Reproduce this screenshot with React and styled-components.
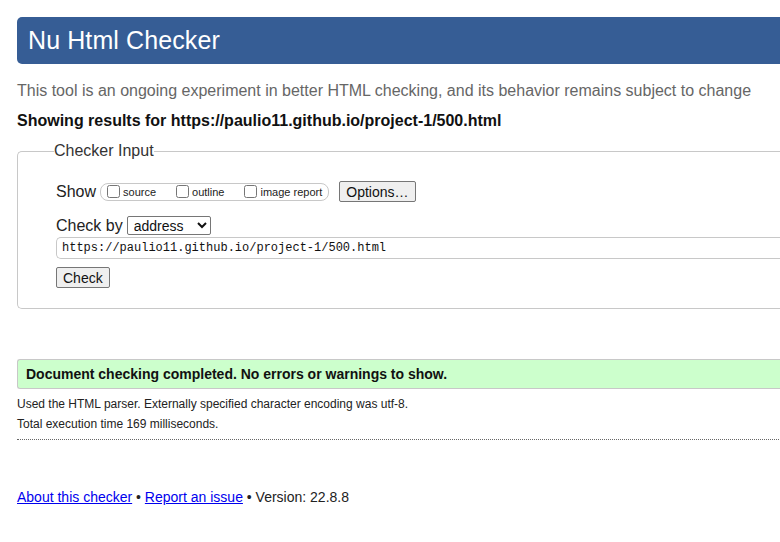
import React from "react";
import styled, { createGlobalStyle } from "styled-components";

const GlobalStyle = createGlobalStyle`
  html, body {
    margin: 0;
    padding: 0;
    background: #ffffff;
    overflow: hidden;
  }
  body {
    font-family: "Liberation Sans", Arial, sans-serif;
    color: #222;
  }
`;

export default function App() {
  return (
    <>
      <GlobalStyle />
      <StyledPage>
        <StyledHeader>
          <StyledTitle>Nu Html Checker</StyledTitle>
        </StyledHeader>
        <StyledIntro>
          This tool is an ongoing experiment in better HTML checking, and its
          behavior remains subject to change
        </StyledIntro>
        <StyledResultsFor>
          Showing results for https://paulio11.github.io/project-1/500.html
        </StyledResultsFor>

        <StyledFieldset>
          <StyledLegend>Checker Input</StyledLegend>
          <StyledRow>
            <StyledLabel>Show</StyledLabel>
            <StyledChoices>
              <StyledChoice>
                <StyledCheckbox type='checkbox' />
                source
              </StyledChoice>
              <StyledChoice>
                <StyledCheckbox type='checkbox' />
                outline
              </StyledChoice>
              <StyledChoice>
                <StyledCheckbox type='checkbox' />
                image report
              </StyledChoice>
            </StyledChoices>
            <StyledButton>Options…</StyledButton>
          </StyledRow>
          <StyledRow $gap={4}>
            <StyledLabel>Check by</StyledLabel>
            <StyledSelect defaultValue='address'>
              <option value='address'>address</option>
              <option value='file'>file upload</option>
              <option value='text'>text input</option>
            </StyledSelect>
          </StyledRow>
          <StyledUrlInput
            type='text'
            defaultValue='https://paulio11.github.io/project-1/500.html'
          />
          <StyledButton>Check</StyledButton>
        </StyledFieldset>

        <StyledSuccess>
          Document checking completed. No errors or warnings to show.
        </StyledSuccess>
        <StyledDetails>
          <p>
            Used the HTML parser. Externally specified character encoding was
            utf-8.
          </p>
          <p>Total execution time 169 milliseconds.</p>
        </StyledDetails>

        <StyledFooter>
          <a href='#about'>About this checker</a> •{" "}
          <a href='#issue'>Report an issue</a> • Version: 22.8.8
        </StyledFooter>
      </StyledPage>
    </>
  );
}

const StyledPage = styled.div`
  width: 800px;
  padding: 17px 0 0 17px;
`;

const StyledHeader = styled.header`
  height: 47px;
  background-color: #365d95;
  border-radius: 5px 0 0 5px;
  display: flex;
  align-items: center;
  padding-left: 11px;
`;

const StyledTitle = styled.h1`
  margin: 0;
  color: #ffffff;
  font-size: 25px;
  font-weight: normal;
  letter-spacing: 0.1px;
`;

const StyledIntro = styled.p`
  margin: 17px 0 0;
  font-size: 16px;
  line-height: 20px;
  color: #666;
`;

const StyledResultsFor = styled.p`
  margin: 10px 0 0;
  font-size: 16px;
  line-height: 20px;
  font-weight: bold;
  color: #111;
`;

const StyledFieldset = styled.fieldset`
  margin: 11px 0 0;
  padding: 21px 0 20px 38px;
  border: 1px solid #c8c8c8;
  border-right: none;
  border-radius: 5px 0 0 5px;
  display: flex;
  flex-direction: column;
  align-items: flex-start;
`;

const StyledLegend = styled.legend`
  margin-left: -2px;
  padding: 0;
  font-size: 16px;
  color: #333;
`;

const StyledRow = styled.div`
  display: flex;
  align-items: center;
  gap: 4px;
  margin-bottom: ${(p) => (p.$gap ? 2 : 14)}px;
`;

const StyledLabel = styled.span`
  font-size: 16px;
  color: #222;
`;

const StyledChoices = styled.div`
  display: flex;
  align-items: center;
  gap: 17px;
  height: 16px;
  padding: 0 6px 0 3px;
  border: 1px solid #c8c8c8;
  border-radius: 8px;
  margin-right: 6px;
`;

const StyledChoice = styled.label`
  display: flex;
  align-items: center;
  font-size: 11px;
  color: #222;
  padding-top: 1px;
`;

const StyledCheckbox = styled.input`
  margin: 0 3px 0 3px;
  width: 13px;
  height: 13px;
  position: relative;
  top: -1px;
`;

const StyledButton = styled.button`
  font-family: "Liberation Sans", Arial, sans-serif;
  font-size: 14px;
  color: #111;
  background-color: #efefef;
  border: 1px solid #767676;
  border-radius: 2px;
  height: 21px;
  padding: 0 6px;
`;

const StyledSelect = styled.select`
  font-family: "Liberation Sans", Arial, sans-serif;
  font-size: 14px;
  color: #111;
  width: 84px;
  height: 19px;
  padding: 0 0 0 2px;
  border: 1px solid #767676;
  border-radius: 2px;
  background: #fff;
`;

const StyledUrlInput = styled.input`
  box-sizing: border-box;
  width: 740px;
  height: 22px;
  margin: 0 0 8px;
  padding: 0 5px;
  font-family: "Liberation Mono", "DejaVu Sans Mono", monospace;
  font-size: 12px;
  color: #111;
  border: 1px solid #c8c8c8;
  border-right: none;
  border-radius: 5px 0 0 5px;
`;

const StyledSuccess = styled.div`
  margin-top: 50px;
  height: 28px;
  display: flex;
  align-items: center;
  padding-left: 8px;
  background-color: #ccffcc;
  border: 1px solid #c8c8c8;
  border-right: none;
  border-radius: 3px 0 0 3px;
  font-size: 14px;
  font-weight: bold;
  color: #111;
`;

const StyledDetails = styled.div`
  padding: 5px 0 5px;
  border-bottom: 1px dotted #666;
  font-size: 12px;
  color: #222;

  & p {
    margin: 0;
    line-height: 20px;
  }
`;

const StyledFooter = styled.footer`
  margin-top: 49px;
  font-size: 14px;
  color: #222;

  & a {
    color: #0000ee;
    text-decoration: underline;
  }
`;
